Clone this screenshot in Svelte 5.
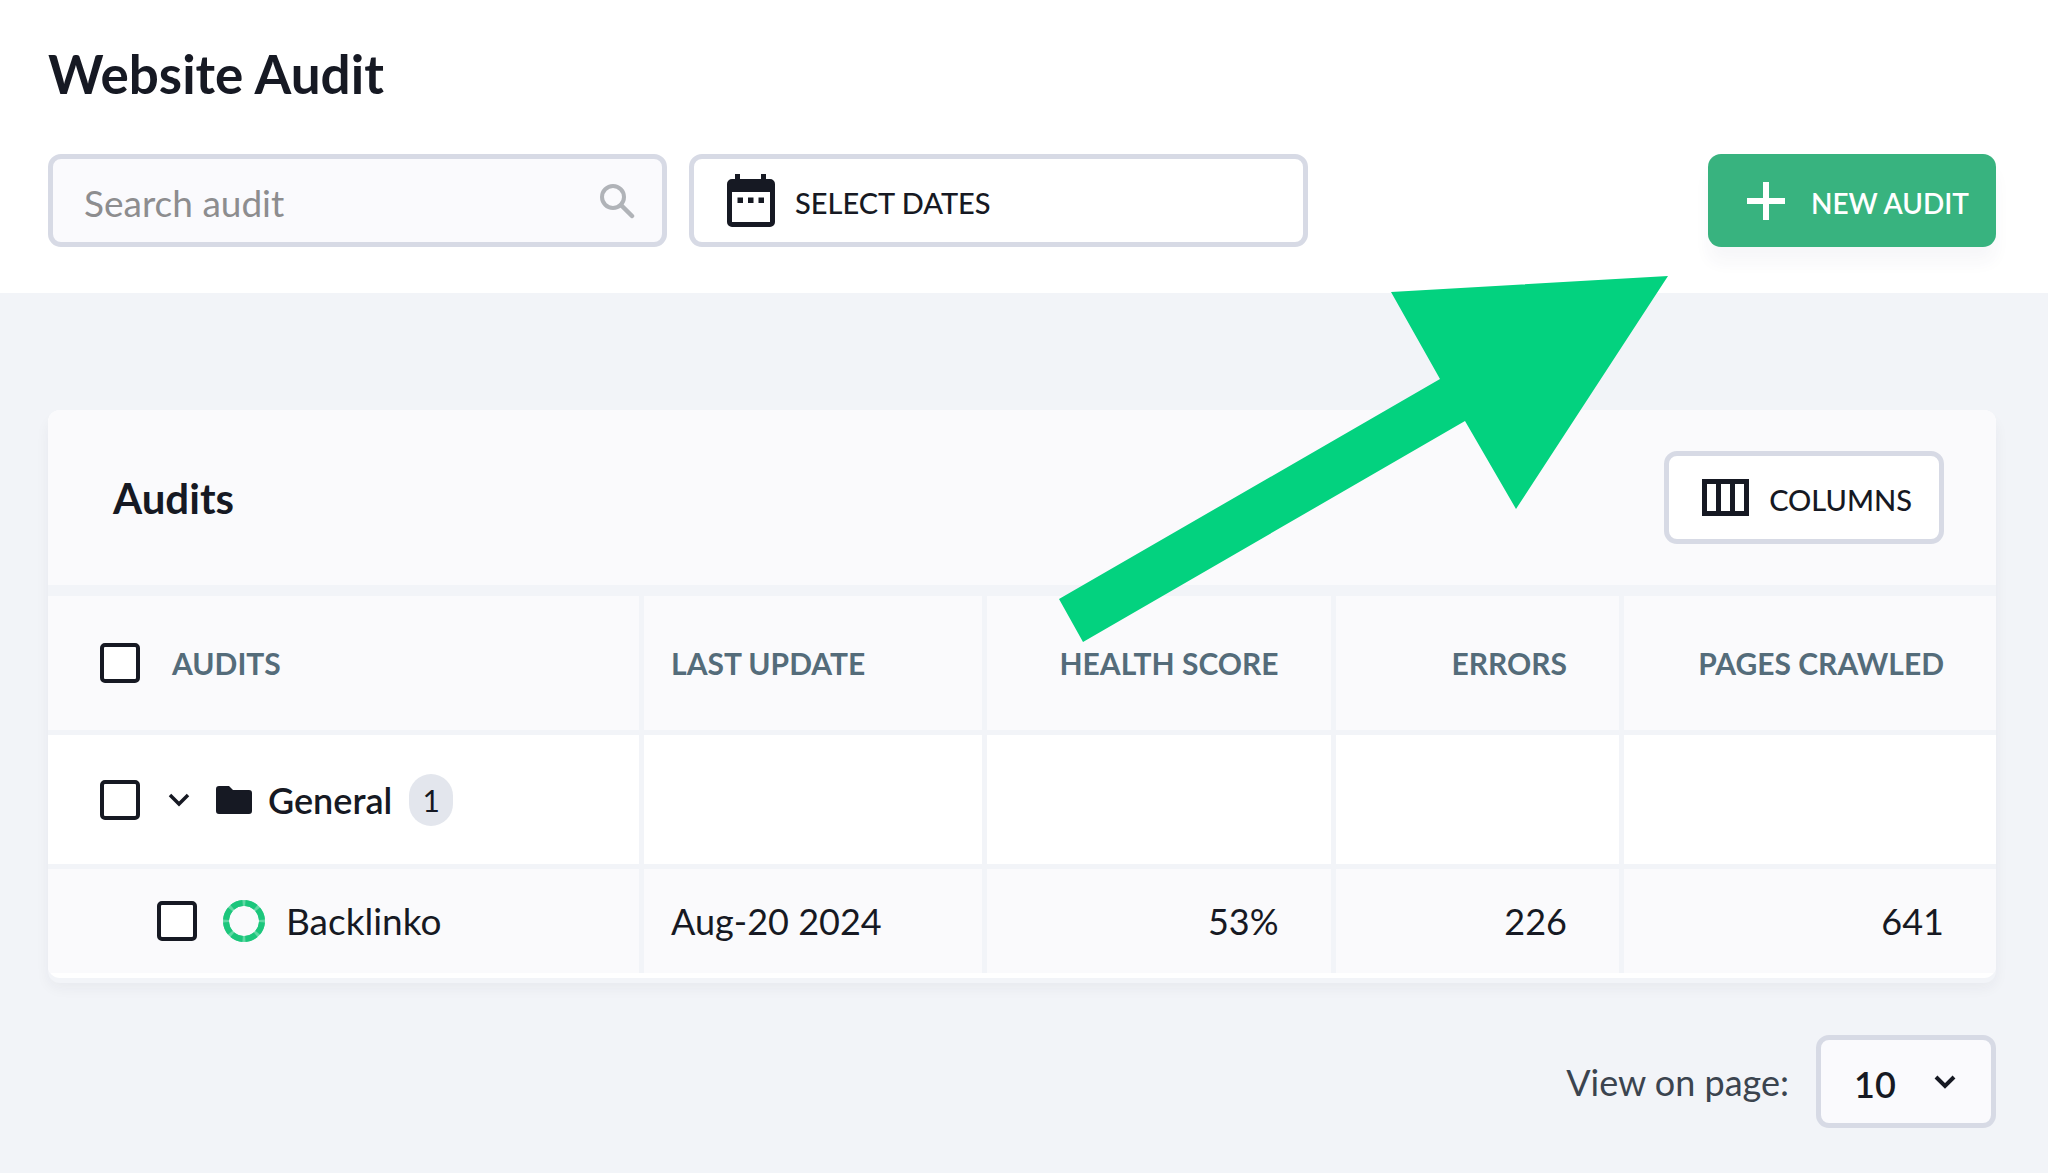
<script lang="ts">
  let search = $state('');
  let perPage = $state('10');
  let open = $state(true);

  const audits = [
    { name: 'Backlinko', updated: 'Aug-20 2024', health: '53%', errors: 226, pages: 641 }
  ];
</script>

<div class="page">
  <header class="top">
    <h1>Website Audit</h1>
    <div class="toolbar">
      <label class="field search">
        <input type="text" placeholder="Search audit" aria-label="Search audit" bind:value={search} />
        <svg width="36" height="36" viewBox="0 0 36 36" aria-hidden="true">
          <circle cx="14" cy="14" r="11" fill="none" stroke="#b0b3b8" stroke-width="4" />
          <path d="M22 22 L33 33" stroke="#b0b3b8" stroke-width="4.5" stroke-linecap="round" />
        </svg>
      </label>
      <button class="field dates">
        <svg width="48" height="54" viewBox="0 0 48 54" aria-hidden="true">
          <path
            fill="#161923"
            fill-rule="evenodd"
            d="M8 0h5v5h21V0h5v5h4a5 5 0 0 1 5 5v38a5 5 0 0 1-5 5H5a5 5 0 0 1-5-5V10a5 5 0 0 1 5-5h3zM5 18v30h38V18zM10.500 23.500h5.500v5.500h-5.500zM21 23.500h5.500v5.500H21zM31.500 23.500h5.500v5.500h-5.500z"
          />
        </svg>
        <span>SELECT DATES</span>
      </button>
      <button class="new-audit">
        <svg width="38" height="38" viewBox="0 0 38 38" aria-hidden="true">
          <path d="M19 0v38M0 19h38" stroke="#fff" stroke-width="6" />
        </svg>
        <span>NEW AUDIT</span>
      </button>
    </div>
  </header>

  <main>
    <section class="card">
      <div class="card-header">
        <h2>Audits</h2>
        <button class="field columns">
          <svg width="47" height="37" viewBox="0 0 47 37" aria-hidden="true">
            <path
              fill="#161923"
              fill-rule="evenodd"
              d="M0 0h47v37H0zM5 5v27h9V5zM19 5v27h9V5zM33 5v27h9V5z"
            />
          </svg>
          <span>COLUMNS</span>
        </button>
      </div>

      <table>
        <colgroup>
          <col class="col-name" />
          <col class="col-update" />
          <col class="col-health" />
          <col class="col-errors" />
          <col />
        </colgroup>
        <thead>
          <tr>
            <th>
              <label class="name"><input type="checkbox" /><span class="head-label">AUDITS</span></label>
            </th>
            <th>LAST UPDATE</th>
            <th class="num">HEALTH SCORE</th>
            <th class="num">ERRORS</th>
            <th class="num">PAGES CRAWLED</th>
          </tr>
        </thead>
        <tbody>
          <tr class="group">
            <td>
              <div class="name">
                <input type="checkbox" aria-label="General" />
                <button class="toggle" aria-label="Toggle General" onclick={() => (open = !open)}>
                  <svg width="22" height="14" viewBox="0 0 22 14" aria-hidden="true">
                    <path d="M2 2l9 9 9-9" fill="none" stroke="#161923" stroke-width="3.5" />
                  </svg>
                </button>
                <svg class="folder" width="36" height="28" viewBox="0 0 36 28" aria-hidden="true">
                  <path
                    fill="#161923"
                    d="M3 0h10l4 4h16a3 3 0 0 1 3 3v18a3 3 0 0 1-3 3H3a3 3 0 0 1-3-3V3a3 3 0 0 1 3-3z"
                  />
                </svg>
                <strong>General</strong>
                <span class="count">{audits.length}</span>
              </div>
            </td>
            <td></td>
            <td></td>
            <td></td>
            <td></td>
          </tr>
          {#if open}
            {#each audits as audit}
              <tr class="item">
                <td>
                  <label class="name">
                    <input type="checkbox" />
                    <svg class="ring" width="42" height="42" viewBox="0 0 42 42" aria-hidden="true">
                      <circle cx="21" cy="21" r="18" fill="none" stroke="#5fd8a3" stroke-width="6" />
                      <circle
                        cx="21"
                        cy="21"
                        r="18"
                        fill="none"
                        stroke="#1cc67c"
                        stroke-width="6"
                        pathLength="80"
                        stroke-dasharray="8 2"
                        stroke-dashoffset="-1"
                      />
                    </svg>
                    {audit.name}
                  </label>
                </td>
                <td>{audit.updated}</td>
                <td class="num">{audit.health}</td>
                <td class="num">{audit.errors}</td>
                <td class="num">{audit.pages}</td>
              </tr>
            {/each}
          {/if}
        </tbody>
      </table>
    </section>

    <div class="pager">
      <label for="per-page">View on page:</label>
      <div class="select">
        <select id="per-page" bind:value={perPage}>
          <option>10</option>
          <option>20</option>
          <option>50</option>
        </select>
        <svg width="22" height="14" viewBox="0 0 22 14" aria-hidden="true">
          <path d="M2 2l9 9 9-9" fill="none" stroke="#161923" stroke-width="4" />
        </svg>
      </div>
    </div>
  </main>

  <svg class="arrow" width="609" height="366" viewBox="0 0 609 366" aria-hidden="true">
    <path fill="#03d27f" d="M609 0L332 16 381 103 0 323 24 366 406 145 457 233z" />
  </svg>
</div>

<style>
  :global(body) {
    background: #f2f4f8;
  }

  .page {
    position: relative;
    font-family: Lato, 'Liberation Sans', sans-serif;
    font-size: 36px;
    line-height: 44px;
    color: #161923;
  }

  .page * {
    box-sizing: border-box;
  }

  button,
  input,
  select {
    font: inherit;
    color: inherit;
  }

  button {
    cursor: pointer;
  }

  svg {
    flex: none;
  }

  .top {
    padding: 44px 52px 46px 48px;
    background: #fff;
  }

  h1 {
    margin: 0 0 50px;
    font-size: 53px;
    line-height: 60px;
    font-weight: 700;
  }

  .toolbar {
    display: flex;
    gap: 22px;
  }

  .field,
  .new-audit {
    display: flex;
    align-items: center;
    height: 93px;
    border: 5px solid #d7dae5;
    border-radius: 13px;
    background: #fff;
    font-size: 29px;
    font-weight: 500;
  }

  .field span,
  .new-audit span {
    padding-top: 4px;
  }

  .search {
    flex: 0 1 619px;
    padding: 0 27px 0 31px;
    background: #fafafd;
    font-size: 37px;
    font-weight: 400;
  }

  .search input {
    flex: 1;
    min-width: 0;
    padding: 4px 0 0;
    border: 0;
    outline: 0;
    background: none;
  }

  .search input::placeholder {
    color: #8d8d8f;
    opacity: 1;
  }

  .dates {
    flex: 0 1 619px;
    gap: 20px;
    padding: 0 33px;
  }

  .new-audit {
    gap: 26px;
    margin-left: auto;
    padding: 0 27px 0 39px;
    border: 0;
    background: #38b37f;
    color: #fff;
    font-size: 28px;
    font-weight: 600;
    box-shadow: 0 16px 16px rgba(40, 40, 90, 0.04);
  }

  main {
    padding: 117px 52px 45px 48px;
  }

  .card {
    padding-bottom: 5px;
    border-radius: 12px;
    background: #fff;
    box-shadow:
      0 5px 0 #f2f4f8,
      0 10px 14px rgba(40, 40, 60, 0.05);
    overflow: hidden;
  }

  .card-header {
    display: flex;
    align-items: center;
    justify-content: space-between;
    padding: 41px 52px 41px 65px;
    border-bottom: 11px solid #f2f4f8;
    background: #fafafc;
  }

  h2 {
    margin: 0;
    font-size: 42px;
    line-height: 48px;
    font-weight: 700;
  }

  .columns {
    gap: 20px;
    padding: 0 27px 0 33px;
  }

  table {
    width: 100%;
    table-layout: fixed;
    border-spacing: 0;
  }

  .col-name {
    width: 30.6%;
  }

  .col-update {
    width: 17.6%;
  }

  .col-health {
    width: 17.9%;
  }

  .col-errors {
    width: 14.8%;
  }

  th,
  td {
    padding: 0 52px 0 27px;
    border-right: 5px solid #f2f4f8;
    text-align: left;
    white-space: nowrap;
  }

  th:first-child,
  td:first-child {
    padding-left: 52px;
  }

  th:last-child,
  td:last-child {
    border-right: 0;
  }

  th {
    height: 139px;
    border-bottom: 5px solid #f2f4f8;
    background: #fafafc;
    color: #546c7a;
    font-size: 30px;
    font-weight: 700;
  }

  .num {
    text-align: right;
  }

  .group td {
    height: 134px;
    border-bottom: 5px solid #f2f4f8;
  }

  .item td {
    height: 104px;
    background: #fafafc;
  }

  .item td:first-child {
    padding-left: 109px;
    font-size: 37px;
  }

  .name {
    display: flex;
    align-items: center;
  }

  input[type='checkbox'] {
    appearance: none;
    flex: none;
    width: 40px;
    height: 40px;
    margin: 0;
    border: 4px solid #161923;
    border-radius: 5px;
    background: #fff;
  }

  input[type='checkbox']:checked {
    background: #38b37f;
  }

  .head-label {
    margin-left: 32px;
  }

  .toggle {
    display: flex;
    margin: 0 26px 0 28px;
    padding: 0;
    border: 0;
    background: none;
  }

  .folder {
    margin-right: 16px;
  }

  strong {
    font-weight: 600;
  }

  .count {
    min-width: 44px;
    margin-left: 17px;
    border-radius: 22px;
    background: #e3e6ed;
    font-size: 30px;
    line-height: 52px;
    text-align: center;
  }

  .ring {
    margin: 0 21px 0 26px;
  }

  .pager {
    display: flex;
    align-items: center;
    justify-content: flex-end;
    gap: 27px;
    margin-top: 57px;
    color: #3b444f;
  }

  .select {
    position: relative;
    color: #161923;
  }

  .select select {
    appearance: none;
    width: 180px;
    height: 93px;
    padding: 4px 33px 0;
    border: 5px solid #d7dae5;
    border-radius: 13px;
    background: #fafafd;
    font-weight: 600;
  }

  .select svg {
    position: absolute;
    top: 40px;
    right: 40px;
    pointer-events: none;
  }

  .arrow {
    position: absolute;
    top: 276px;
    right: 380px;
    pointer-events: none;
  }
</style>
